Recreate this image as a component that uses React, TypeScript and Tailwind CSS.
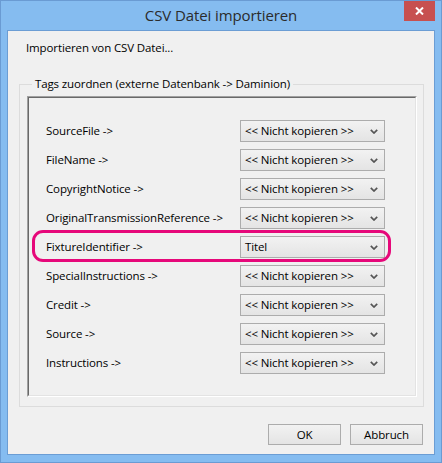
import React from "react";

const rows: [string, string][] = [
  ["SourceFile ->", "<< Nicht kopieren >>"],
  ["FileName ->", "<< Nicht kopieren >>"],
  ["CopyrightNotice ->", "<< Nicht kopieren >>"],
  ["OriginalTransmissionReference ->", "<< Nicht kopieren >>"],
  ["FixtureIdentifier ->", "Titel"],
  ["SpecialInstructions ->", "<< Nicht kopieren >>"],
  ["Credit ->", "<< Nicht kopieren >>"],
  ["Source ->", "<< Nicht kopieren >>"],
  ["Instructions ->", "<< Nicht kopieren >>"],
];

function Chevron() {
  return (
    <svg width="8" height="5" viewBox="0 0 8 5" className="shrink-0">
      <path d="M0.8 0.8 L4 4 L7.2 0.8" fill="none" stroke="#555555" strokeWidth="1.7" />
    </svg>
  );
}

function Combo({ value }: { value: string }) {
  return (
    <div className="w-[145px] h-[22px] border border-[#acacac] bg-gradient-to-b from-[#f2f2f2] to-[#e4e4e4] flex items-center pl-[4px] pr-[6px] justify-between">
      <span className="text-black leading-[16px] whitespace-nowrap">{value}</span>
      <Chevron />
    </div>
  );
}

function Btn({ label }: { label: string }) {
  return (
    <div className="w-[73px] h-[21px] border border-[#acacac] bg-gradient-to-b from-[#f2f2f2] to-[#e4e4e4] flex items-center justify-center text-black leading-[16px]">
      {label}
    </div>
  );
}

export default function App() {
  return (
    <div
      className="w-[442px] h-[463px] bg-[#85bcf0] border border-[#6a9bd3] flex flex-col relative text-[11.5px] tracking-[-0.12px] text-black"
      style={{ fontFamily: '"Open Sans", "Noto Sans", sans-serif' }}
    >
      <div className="h-[29px] flex items-center justify-center text-[15px] tracking-[-0.1px] text-[#2b2b2b] leading-[20px] pb-[1px]">
        CSV Datei importieren
      </div>
      <div className="absolute right-[6px] top-0 w-[31px] h-[20px] bg-[#c75050] flex items-center justify-center">
        <svg width="9" height="8" viewBox="0 0 9 8">
          <path d="M1 0.5 L8 7.5 M8 0.5 L1 7.5" stroke="#ffffff" strokeWidth="2" />
        </svg>
      </div>
      <div className="mx-[6px] mb-[7px] flex-1 border border-[#6b9dd4] bg-[#f0f0f0] flex flex-col">
        <div className="pl-[18px] pt-[9px] leading-[16px]">Importieren von CSV Datei...</div>
        <fieldset className="ml-[11px] mr-[10px] mt-[20px] border border-[#dcdcdc] pl-[7px] pr-[6px] pb-[9px]">
          <legend className="ml-[5px] px-[3px] leading-[16px]">Tags zuordnen (externe Datenbank -&gt; Daminion)</legend>
          <div className="mt-[4px] border-t border-l border-[#a0a0a0] border-r-white border-b-white border-r border-b">
            <div className="border-t border-l border-[#696969] border-r border-b border-r-[#e3e3e3] border-b-[#e3e3e3] pl-[17px] pt-[22px] pb-[21px] flex flex-col gap-[7px]">
              {rows.map(([label, value], i) => (
                <div key={i} className="relative flex items-center h-[22px]">
                  <div className="w-[194px] leading-[16px] whitespace-nowrap">{label}</div>
                  <Combo value={value} />
                  {i === 4 && (
                    <div className="absolute left-[-14px] right-[24px] top-[-6px] bottom-[-4px] border-[3px] border-[#e6087a] rounded-[11px]" />
                  )}
                </div>
              ))}
            </div>
          </div>
        </fieldset>
        <div className="flex justify-end gap-[9px] mr-[11px] mt-[17px]">
          <Btn label="OK" />
          <Btn label="Abbruch" />
        </div>
      </div>
    </div>
  );
}
